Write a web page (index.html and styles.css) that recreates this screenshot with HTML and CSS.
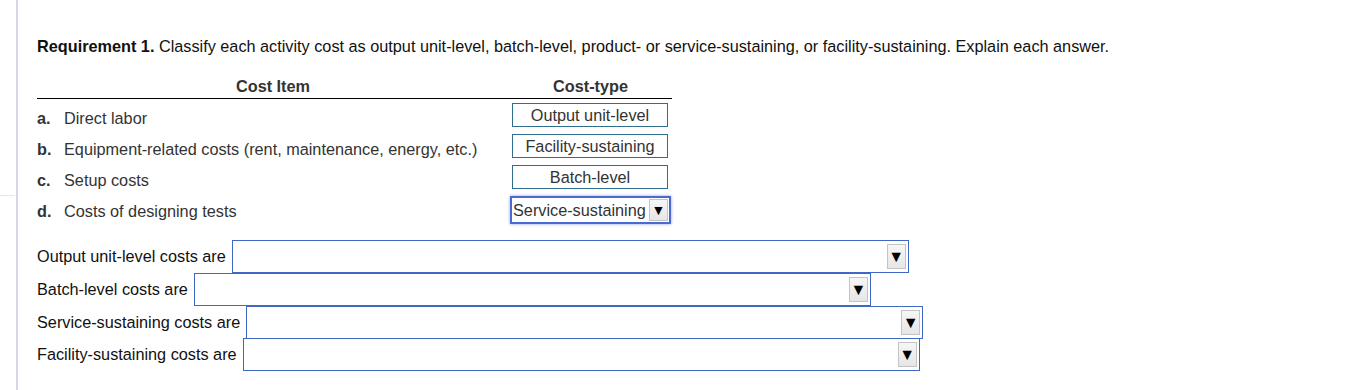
FILE: index.html
```html
<!DOCTYPE html>
<html lang="en">
<head>
  <meta charset="UTF-8">
  <title>Requirement 1</title>
  <link rel="stylesheet" href="styles.css">
</head>
<body>
  <div id="side-tick"></div>
  <div id="page">
    <p class="req"><b>Requirement 1.</b> Classify each activity cost as output unit-level, batch-level, product- or service-sustaining, or facility-sustaining. Explain each answer.</p>

    <table class="cost-table">
      <tr class="head">
        <th class="col-item">Cost Item</th>
        <th class="col-type">Cost-type</th>
      </tr>
      <tr>
        <td class="item"><span class="letter">a.</span>Direct labor</td>
        <td class="col-type"><div class="answer">Output unit-level</div></td>
      </tr>
      <tr>
        <td class="item"><span class="letter">b.</span>Equipment-related costs (rent, maintenance, energy, etc.)</td>
        <td class="col-type"><div class="answer">Facility-sustaining</div></td>
      </tr>
      <tr>
        <td class="item"><span class="letter">c.</span>Setup costs</td>
        <td class="col-type"><div class="answer">Batch-level</div></td>
      </tr>
      <tr>
        <td class="item"><span class="letter">d.</span>Costs of designing tests</td>
        <td class="col-type">
          <div class="answer-select">
            <span>Service-sustaining</span>
            <span class="dd-btn small">&#9660;</span>
          </div>
        </td>
      </tr>
    </table>

    <div class="explain">
      <div class="explain-row">
        <span class="label">Output unit-level costs are</span>
        <div class="dropdown"><span class="dd-btn">&#9660;</span></div>
      </div>
      <div class="explain-row">
        <span class="label">Batch-level costs are</span>
        <div class="dropdown"><span class="dd-btn">&#9660;</span></div>
      </div>
      <div class="explain-row">
        <span class="label">Service-sustaining costs are</span>
        <div class="dropdown"><span class="dd-btn">&#9660;</span></div>
      </div>
      <div class="explain-row">
        <span class="label">Facility-sustaining costs are</span>
        <div class="dropdown"><span class="dd-btn">&#9660;</span></div>
      </div>
    </div>
  </div>
</body>
</html>
```

FILE: styles.css
```css
body {
  margin: 0;
  background: #fff;
  color: #000;
  font-family: "Liberation Sans", Arial, sans-serif;
  font-size: 16.25px;
  height: 390px;
  overflow: hidden;
  position: relative;
}

#page {
  margin-left: 16px;
  border-left: 2px solid #d3d8e2;
  height: 390px;
  padding-left: 19px;
  padding-top: 36px;
  box-sizing: border-box;
}

#side-tick {
  position: absolute;
  left: 0;
  top: 195px;
  width: 15px;
  height: 1px;
  background: #e4e6ea;
}

.req {
  margin: 0 0 20px 0;
  line-height: 20px;
  color: #111;
}

.cost-table {
  border-collapse: collapse;
  width: 635px;
  color: #333;
}

.cost-table th {
  font-weight: bold;
  padding: 0 0 2px 0;
  border-bottom: 1px solid #000;
  vertical-align: top;
  line-height: 20px;
}

.cost-table tr.head {
  height: 22px;
}

.col-item {
  width: 472px;
}

.col-type {
  text-align: center;
}

.cost-table tr {
  height: 31px;
}

.cost-table td {
  padding: 4px 0 0 0;
  line-height: 20px;
  vertical-align: top;
}

.cost-table td.item {
  padding-top: 9px;
}

.letter {
  font-weight: bold;
  display: inline-block;
  width: 27px;
}

.answer {
  width: 154px;
  height: 22px;
  line-height: 22px;
  margin-left: 3px;
  border: 1px solid #2f6e8e;
  color: #333;
}

.answer-select {
  display: flex;
  align-items: center;
  justify-content: space-between;
  width: 156px;
  height: 24px;
  margin-left: 1px;
  border: 2px solid #4a6ad2;
  box-shadow: 0 0 3px #8aa2e6;
  color: #333;
  padding-left: 1px;
  white-space: nowrap;
}

.explain {
  margin-top: 17px;
}

.explain-row {
  display: flex;
  align-items: center;
  height: 32.7px;
  color: #111;
}

.label {
  margin-right: 6px;
}

.dropdown {
  width: 673px;
  height: 31px;
  border: 1px solid #3f67c6;
  display: flex;
  align-items: center;
  justify-content: flex-end;
  padding-right: 2px;
}

.dd-btn {
  width: 17px;
  height: 23px;
  border: 1px solid #c4c4c4;
  background: linear-gradient(#f6f6f6, #e6e6e6);
  color: #000;
  font-size: 16px;
  line-height: 23px;
  text-align: center;
}

.dd-btn.small {
  width: 17px;
  height: 20px;
  line-height: 20px;
  font-size: 14px;
  margin-right: 1px;
}
```
